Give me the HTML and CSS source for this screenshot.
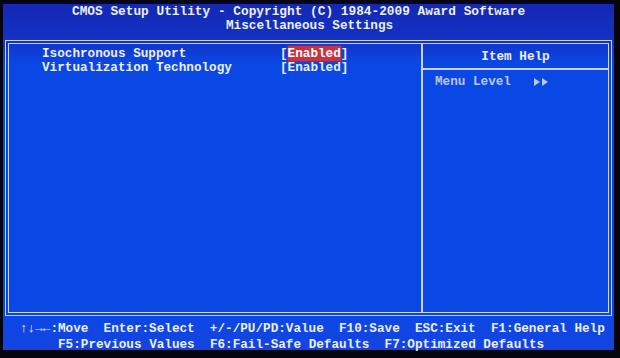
FILE: index.html
```html
<!DOCTYPE html>
<html>
<head>
<meta charset="utf-8">
<link rel="stylesheet" href="styles.css">
</head>
<body>
<div class="screen">
  <div class="title">
    <div class="ln t1">CMOS Setup Utility - Copyright (C) 1984-2009 Award Software</div>
    <div class="ln t2">Miscellaneous Settings</div>
  </div>
  <div class="frame">
    <div class="main">
      <div class="row"><span class="name">Isochronous Support</span><span class="val">[<span class="sel">Enabled</span>]</span></div>
      <div class="row"><span class="name">Virtualization Technology</span><span class="val">[Enabled]</span></div>
    </div>
    <div class="help">
      <div class="help-head">Item Help</div>
      <div class="help-body"><span class="ln">Menu Level   </span><svg class="tri" width="15" height="8" viewBox="0 0 15 8"><path d="M0 0 L6 4 L0 8 Z M8 0 L14 4 L8 8 Z" fill="#b8c6ea"/></svg></div>
    </div>
  </div>
  <div class="footer">
    <div class="ln f1">↑↓→←:Move  Enter:Select  +/-/PU/PD:Value  F10:Save  ESC:Exit  F1:General Help</div>
    <div class="ln f2">F5:Previous Values  F6:Fail-Safe Defaults  F7:Optimized Defaults</div>
  </div>
</div>
</body>
</html>
```
FILE: styles.css
```css
html, body {
  margin: 0;
  padding: 0;
  background: #05050f;
}
body {
  width: 620px;
  height: 358px;
  overflow: hidden;
}
.screen {
  margin: 4px 0 0 3px;
  width: 611px;
  height: 346px;
  display: flex;
  flex-direction: column;
  background: linear-gradient(#1328b4 0px, #1432c4 36px, #0a48e6 60px, #0a48e6 300px, #1444e0 346px);
  font-family: "Liberation Mono", "DejaVu Sans Mono", monospace;
  font-weight: bold;
  font-size: 12.67px;
  color: #eceff8;
}
.ln, .name, .val {
  white-space: pre;
}
.title {
  flex: none;
  height: 36px;
  padding-top: 1px;
  box-sizing: border-box;
  line-height: 14px;
}
.t1 {
  padding-left: 69px;
  font-size: 12.8px;
}
.t2 {
  padding-left: 223px;
}
.frame {
  margin-left: 2px;
  width: 607px;
  height: 276px;
  flex: none;
  box-sizing: border-box;
  border: 4px double #c8d2f2;
  display: flex;
}
.main {
  width: 414px;
  border-right: 2px solid #c8d2f2;
  box-sizing: border-box;
  padding: 3px 0 0 33px;
  line-height: 14px;
}
.row {
  display: flex;
}
.name {
  width: 238px;
}
.sel {
  background: #c93244;
  color: #fff;
  box-shadow: 0 0 2px #c93244;
}
.help {
  flex: 1;
  display: flex;
  flex-direction: column;
}
.help-head {
  height: 26px;
  line-height: 25px;
  text-align: center;
  border-bottom: 2px solid #c8d2f2;
  box-sizing: border-box;
}
.help-body {
  padding: 5px 0 0 12px;
  line-height: 14px;
  color: #b8c6ea;
  display: flex;
  align-items: center;
}
.tri {
  display: block;
}
.footer {
  flex: 1;
  min-height: 0;
  padding-top: 5px;
  line-height: 16px;
}
.f1 {
  padding-left: 17px;
}
.f2 {
  padding-left: 55px;
}
```
